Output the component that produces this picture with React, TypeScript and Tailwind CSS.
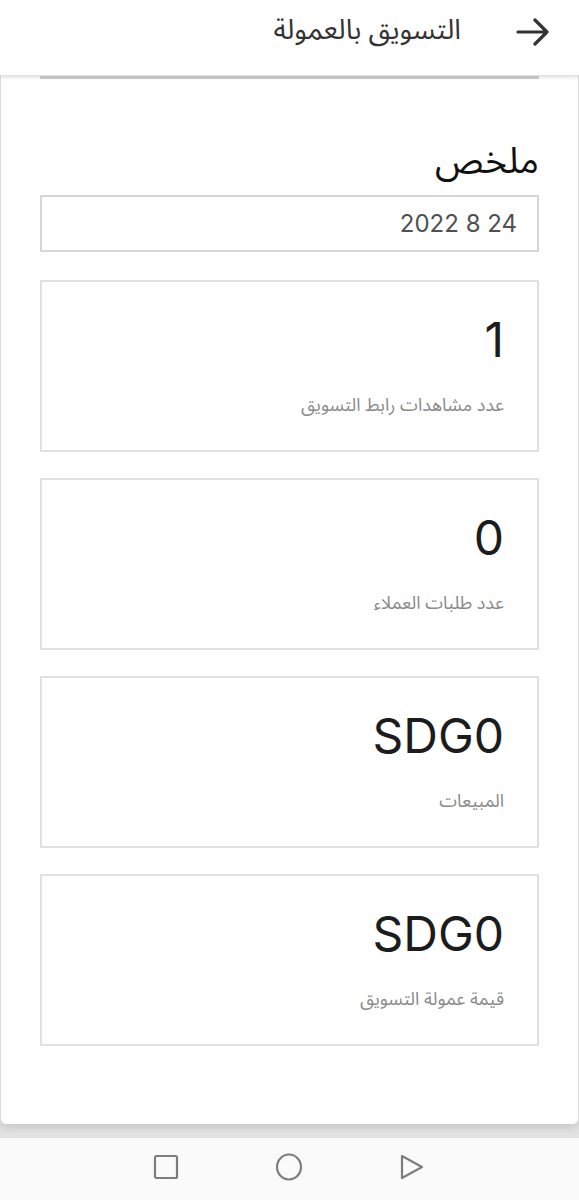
import React from 'react'

const stats = [
  { value: '1', label: 'عدد مشاهدات رابط التسويق' },
  { value: '0', label: 'عدد طلبات العملاء' },
  { value: 'SDG0', label: 'المبيعات' },
  { value: 'SDG0', label: 'قيمة عمولة التسويق' },
]

const arabic = { fontFamily: '"Noto Sans Arabic", "Noto Sans", "DejaVu Sans", sans-serif' }
const latin = { fontFamily: 'Inter, "Noto Sans", sans-serif' }

export default function App() {
  return (
    <div dir="rtl" className="w-[579px] h-[1200px] bg-[#e3e3e3] flex flex-col overflow-hidden">
      {/* header */}
      <div className="h-[75px] bg-white flex items-center justify-between px-[29px] relative z-10 shadow-[0_2px_4px_rgba(0,0,0,0.15)]">
        <svg width="34" height="28" viewBox="0 0 34 28" className="text-[#333] -mt-[11px]">
          <path d="M2 14 H31 M19 2 L31 14 L19 26" fill="none" stroke="currentColor" strokeWidth="3.2" strokeLinecap="round" strokeLinejoin="round" />
        </svg>
        <div className="flex-1 pr-[55px] -mt-[14px] text-[28px] text-[#333]" style={arabic}>
          التسويق بالعمولة
        </div>
      </div>

      {/* panel */}
      <div className="h-[1049px] bg-white border-x border-[#dcdcdc] rounded-b-[6px] shadow-[0_4px_10px_rgba(0,0,0,0.12)] px-[39px] flex flex-col">
        <div className="h-[3px] bg-[#cfcfcf] mt-[1px]" />
        <div className="mt-[52px] h-[64px] text-[37px] leading-[60px] text-[#111]" style={arabic}>
          ملخص
        </div>
        <div className="h-[57px] border-2 border-[#d6d6d6] flex items-center px-[20px] text-[24px] text-[#505050]" style={latin}>
          <span dir="ltr">2022 8 24</span>
        </div>
        <div className="mt-[28px] flex flex-col gap-[26px]">
          {stats.map((s, i) => (
            <div key={i} className="h-[172px] border-2 border-[#e0e0e0] pr-[33px] pt-[28px]">
              <div className="text-[48px] leading-[60px] text-[#1c1c1c]" style={latin}>
                <span dir="ltr">{s.value}</span>
              </div>
              <div className="mt-[22px] text-[18px] leading-[26px] text-[#8a8a8a]" style={arabic}>
                {s.label}
              </div>
            </div>
          ))}
        </div>
      </div>

      <div className="h-[14px]" />

      {/* nav bar */}
      <div dir="ltr" className="h-[62px] bg-[#fafafa] flex items-center justify-center gap-[96px] pb-[4px] pr-[2px]">
        <svg width="26" height="26" viewBox="0 0 26 26">
          <rect x="2" y="2" width="22" height="22" rx="1.5" fill="none" stroke="#7d7d7d" strokeWidth="2.2" />
        </svg>
        <svg width="28" height="28" viewBox="0 0 28 28">
          <ellipse cx="14" cy="14" rx="12" ry="12.5" fill="none" stroke="#7d7d7d" strokeWidth="2.2" />
        </svg>
        <svg width="26" height="28" viewBox="0 0 26 28">
          <path d="M3 3 L23 14 L3 25 Z" fill="none" stroke="#7d7d7d" strokeWidth="2.2" strokeLinejoin="round" />
        </svg>
      </div>
    </div>
  )
}
